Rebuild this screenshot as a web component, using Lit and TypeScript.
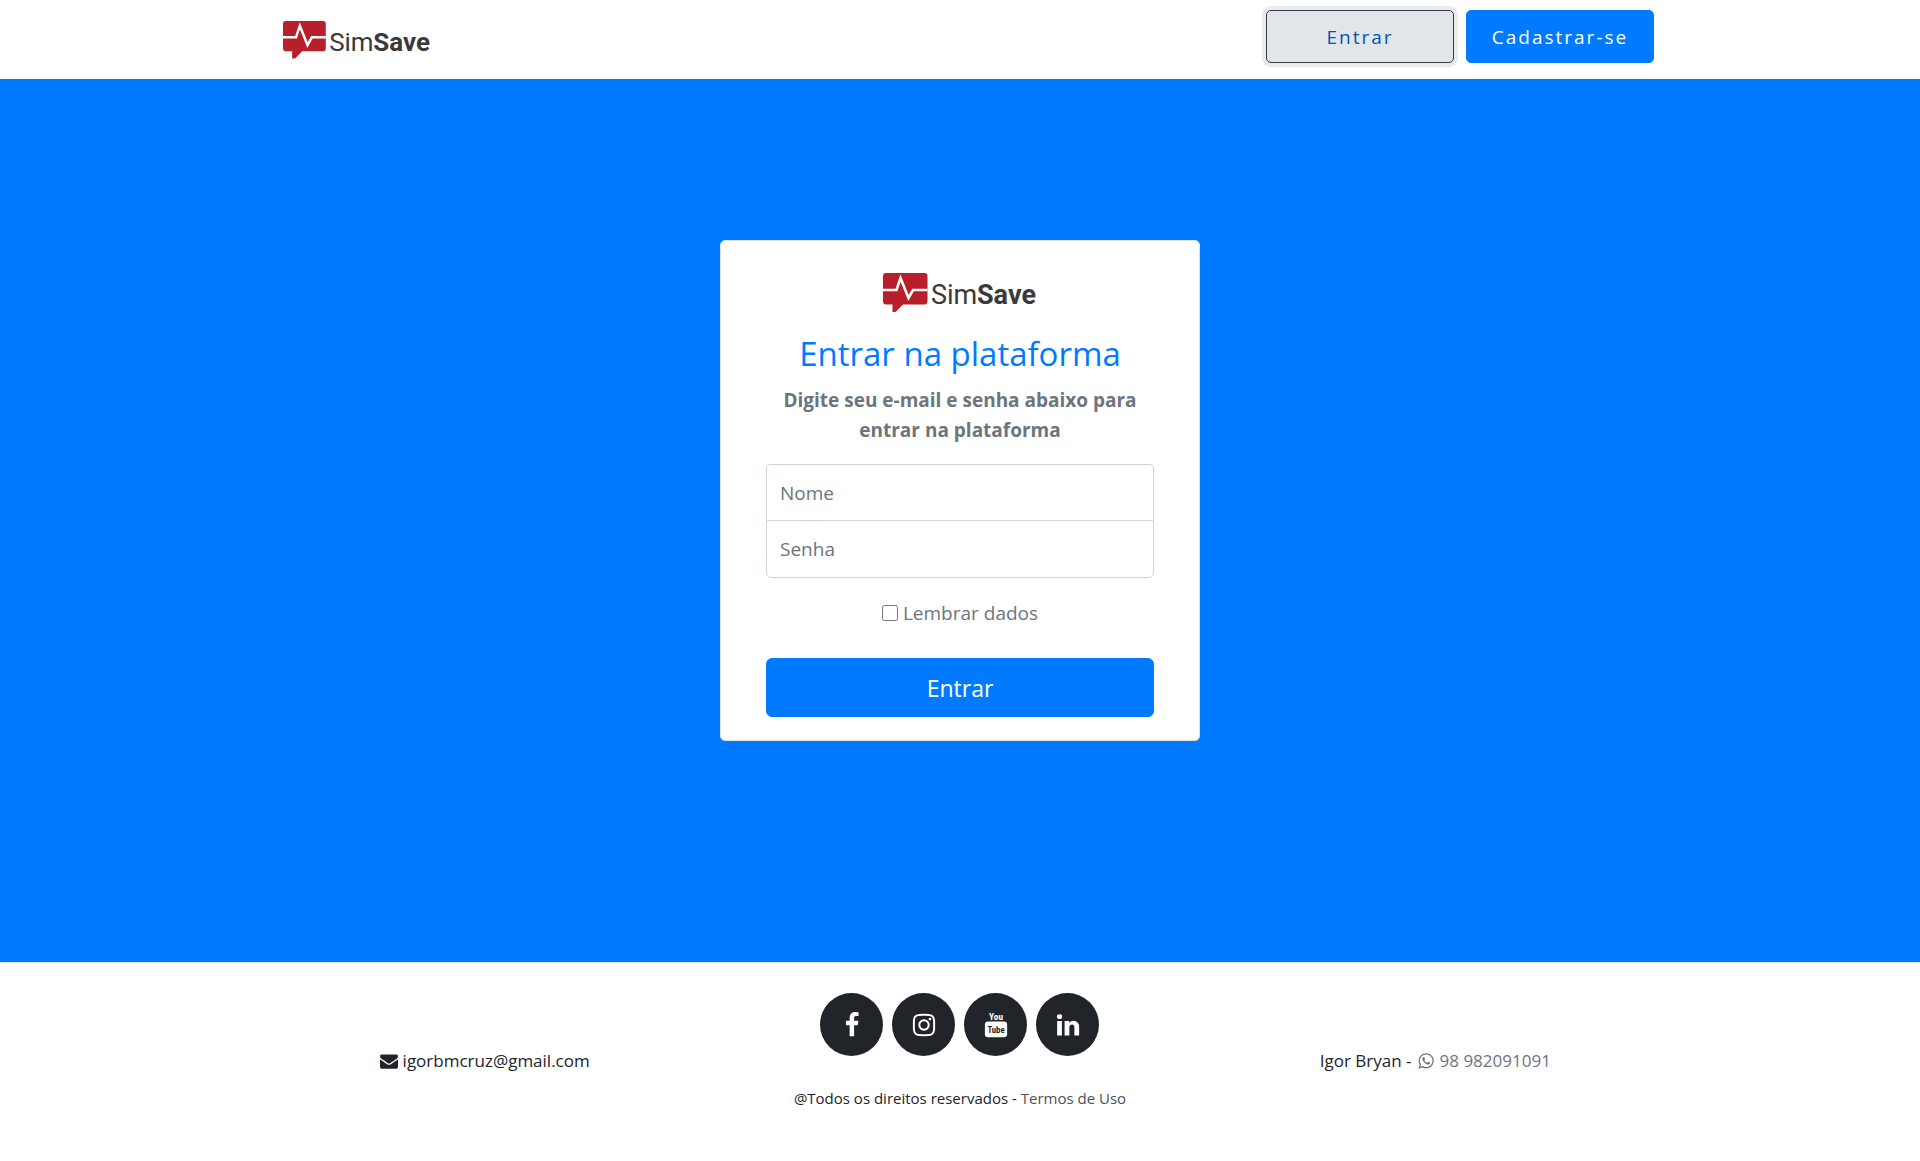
import { LitElement, html, css, svg } from "lit";
import { customElement } from "lit/decorators.js";

const facebook = svg`<path d="M1343 12v264h-157q-86 0-116 36t-30 108v189h293l-39 296h-254v759h-306v-759h-255v-296h255v-218q0-186 104-288.5t277-102.5q147 0 228 12z"/>`;
const instagram = svg`<path d="M1152 896q0-106-75-181t-181-75-181 75-75 181 75 181 181 75 181-75 75-181zm138 0q0 164-115 279t-279 115-279-115-115-279 115-279 279-115 279 115 115 279zm108-410q0 38-27 65t-65 27-65-27-27-65 27-65 65-27 65 27 27 65zm-502-220q-7 0-76.5-.5t-105.5 0-96.5 3-103 10-71.5 18.5q-50 20-88 58t-58 88q-11 29-18.5 71.5t-10 103-3 96.5 0 105.5.5 76.5-.5 76.5 0 105.5 3 96.5 10 103 18.5 71.5q20 50 58 88t88 58q29 11 71.5 18.5t103 10 96.5 3 105.5 0 76.5-.5 76.5.5 105.5 0 96.5-3 103-10 71.5-18.5q50-20 88-58t58-88q11-29 18.5-71.5t10-103 3-96.5 0-105.5-.5-76.5.5-76.5 0-105.5-3-96.5-10-103-18.5-71.5q-20-50-58-88t-88-58q-29-11-71.5-18.5t-103-10-96.5-3-105.5 0-76.5.5zm768 630q0 229-5 317-10 208-124 322t-322 124q-88 5-317 5t-317-5q-208-10-322-124t-124-322q-5-88-5-317t5-317q10-208 124-322t322-124q88-5 317-5t317 5q208 10 322 124t124 322q5 88 5 317z"/>`;
const youtube = svg`
  <text class="tube" x="896" y="520" font-size="640" text-anchor="middle" fill="#fff">You</text>
  <rect x="130" y="660" width="1532" height="1080" rx="220"/>
  <text class="tube" x="896" y="1420" font-size="600" text-anchor="middle" fill="#212529">Tube</text>`;
const linkedin = svg`<path d="M477 625v991h-330v-991h330zm21-306q1 73-50.5 122t-135.5 49h-2q-82 0-132-49t-50-122q0-74 51.5-122.5t134.5-48.5 133 48.5 51 122.5zm1166 729v568h-329v-530q0-105-40.5-164.5t-126.5-59.5q-63 0-105.5 34.5t-63.5 85.5q-11 30-11 81v553h-329q2-399 2-647t-1-296l-1-48h329v144h-2q20-32 41-56t56.5-52 87-43.5 114.5-15.5q171 0 275 113.5t104 332.5z"/>`;
const envelope = svg`<path d="M1792 710v794q0 66-47 113t-113 47h-1472q-66 0-113-47t-47-113v-794q44 49 101 87 362 246 497 345 57 42 92.5 65.5t94.5 48 110 24.5h2q51 0 110-24.5t94.5-48 92.5-65.5q170-123 498-345 57-39 100-87zm0-294q0 79-49 151t-122 123q-376 261-468 325-10 7-42.5 31t-54 38.5-52 32.5-57.5 27-50 9h-2q-23 0-50-9t-57.5-27-52-32.5-54-38.5-42.5-31q-91-64-262-182.5t-205-142.5q-62-42-117-115.5t-55-136.5q0-78 41.5-130t118.5-52h1472q65 0 112.5 47t47.5 113z"/>`;
const whatsapp = svg`<path d="M1113 974q13 0 97.5 44t89.5 53q2 5 2 15 0 33-17 76-16 39-71 65.5t-102 26.5q-57 0-190-62-98-45-170-118t-148-185q-72-107-71-194v-8q3-91 74-158 24-22 52-22 6 0 18 1.5t19 1.5q19 0 26.5 6.5t15.5 27.5q8 20 33 88t25 75q0 21-34.5 57.5t-34.5 46.5q0 7 5 15 34 73 102 137 56 53 151 101 12 7 22 7 15 0 54-48.5t52-48.5zm-203 530q127 0 243.5-50t200.5-134 134-200.5 50-243.5-50-243.5-134-200.5-200.5-134-243.5-50-243.5 50-200.5 134-134 200.5-50 243.5q0 203 120 368l-79 233 242-77q158 104 345 104zm0-1382q153 0 292.5 60t240.5 161 161 240.5 60 292.5-60 292.5-161 240.5-240.5 161-292.5 60q-195 0-365-94l-417 134 136-405q-108-178-108-389 0-153 60-292.5t161-240.5 240.5-161 292.5-60z"/>`;

const socials = [
  { name: "Facebook", icon: facebook },
  { name: "Instagram", icon: instagram },
  { name: "YouTube", icon: youtube },
  { name: "LinkedIn", icon: linkedin },
];

@customElement("sim-logo")
export class SimLogo extends LitElement {
  static styles = css`
    :host { display: block; }
    .mark { display: block; width: 100%; height: auto; overflow: visible; }
    .word { font-family: Roboto, "Liberation Sans", sans-serif; font-size: 27px; fill: #3a3a3a; }
    .bold { font-weight: 700; }
  `;
  render() {
    return html`
      <svg class="mark" viewBox="0 0 154 39" role="img" aria-label="SimSave">
        <path fill="#b81f2a" d="M3 0H41.500Q44.500 0 44.500 3V28Q44.500 31.500 41.500 31.500H20L12.500 39H9.500V31.500H3Q0 31.500 0 28V3Q0 0 3 0Z"/>
        <path fill="none" stroke="#fff" stroke-width="2.600" d="M0 17H13.500L17.500 5L25.500 25L30 17H44.500"/>
        <text class="word" x="48" y="31">Sim</text>
        <text class="word bold" x="94" y="31">Save</text>
      </svg>`;
  }
}

@customElement("app-root")
export class AppRoot extends LitElement {
  static styles = css`
    :host {
      display: flex;
      flex-direction: column;
      min-height: 100vh;
      background: #fff;
      color: #212529;
      font-family: "Segoe UI", "Open Sans", "Noto Sans", sans-serif;
      font-size: 19px;
      line-height: 30px;
    }
    * { box-sizing: border-box; }
    a { color: inherit; text-decoration: none; }
    .container { width: 100%; max-width: 1426px; margin: 0 auto; }
    .bar { display: flex; align-items: flex-start; justify-content: space-between; padding: 10px 19px 16px 36px; }
    .brand { width: 148px; margin-top: 11px; }
    .actions { display: flex; gap: 12px; }
    .button {
      width: 188px;
      height: 53px;
      border: 1px solid #007bff;
      border-radius: 5px;
      background: #007bff;
      color: #fff;
      font: inherit;
      letter-spacing: 2px;
      cursor: pointer;
    }
    .current {
      border-color: #343a40;
      background: #e2e6ea;
      color: #0056b3;
      box-shadow: 0 0 0 4px #e9ebec;
    }
    main {
      display: flex;
      flex: 1;
      align-items: flex-start;
      justify-content: center;
      padding: 161px 20px;
      background: #007bff;
    }
    .card {
      display: flex;
      flex-direction: column;
      width: 100%;
      max-width: 480px;
      padding: 32px 45px 23px;
      border: 1px solid #dfdfdf;
      border-radius: 5px;
      background: #fff;
      color: #6c757d;
      text-align: center;
    }
    .badge { width: 154px; margin: 0 auto; }
    h1 { margin: 20px 0 9px; color: #007bff; font-size: 33px; font-weight: 400; line-height: 44px; }
    .lead { margin: 0 0 19px; font-size: 19px; font-weight: 700; }
    .field {
      width: 100%;
      height: 56px;
      padding: 0 13px;
      border: 1px solid #ced4da;
      background: #fff;
      color: #495057;
      font: inherit;
    }
    .field::placeholder { color: #6c757d; opacity: 1; }
    .first { border-radius: 5px 5px 0 0; border-bottom: 0; }
    .last { height: 58px; border-radius: 0 0 5px 5px; }
    .remember { display: flex; align-items: center; justify-content: center; gap: 5px; margin: 20px 0 30px; }
    .check { width: 16px; height: 16px; margin: 0; }
    .submit { width: 100%; height: 59px; border-radius: 6px; font-size: 23px; letter-spacing: normal; }
    footer { border-top: 1px solid #dee2e6; padding: 30px 0 48px; font-size: 17px; }
    .columns { display: grid; grid-template-columns: repeat(3, 1fr); align-items: center; text-align: center; }
    .contact { display: flex; align-items: center; justify-content: center; gap: 5px; padding-top: 16px; }
    .muted { display: inline-flex; align-items: center; gap: 5px; color: #6c757d; }
    .glyph { width: 18px; height: 18px; fill: currentColor; }
    .socials { display: flex; justify-content: center; gap: 9px; margin-bottom: 27px; }
    .social {
      display: flex;
      align-items: center;
      justify-content: center;
      width: 63px;
      height: 63px;
      border-radius: 50%;
      background: #212529;
    }
    .icon { width: 26px; height: 26px; fill: #fff; overflow: visible; }
    .tube { font-family: "Roboto Condensed", "Liberation Sans Narrow", Roboto, sans-serif; font-weight: 700; }
    .legal { margin: 0; font-size: 15px; }
    .terms { color: #495057; }
  `;

  render() {
    return html`
      <header>
        <div class="container bar">
          <a class="brand" href="#"><sim-logo></sim-logo></a>
          <nav class="actions">
            <button class="button current" type="button">Entrar</button>
            <button class="button" type="button">Cadastrar-se</button>
          </nav>
        </div>
      </header>
      <main>
        <form class="card">
          <sim-logo class="badge"></sim-logo>
          <h1>Entrar na plataforma</h1>
          <p class="lead">Digite seu e-mail e senha abaixo para entrar na plataforma</p>
          <input class="field first" type="text" placeholder="Nome" aria-label="Nome">
          <input class="field last" type="password" placeholder="Senha" aria-label="Senha">
          <label class="remember"><input class="check" type="checkbox">Lembrar dados</label>
          <button class="button submit" type="button">Entrar</button>
        </form>
      </main>
      <footer>
        <div class="container columns">
          <a class="contact" href="mailto:igorbmcruz@gmail.com">
            <svg class="glyph" viewBox="0 0 1792 1792">${envelope}</svg>igorbmcruz@gmail.com
          </a>
          <div>
            <div class="socials">
              ${socials.map(
                (s) => html`<a class="social" href="#" aria-label=${s.name}>
                  <svg class="icon" viewBox="0 0 1792 1792">${s.icon}</svg>
                </a>`
              )}
            </div>
            <p class="legal">@Todos os direitos reservados - <a class="terms" href="#">Termos de Uso</a></p>
          </div>
          <div class="contact">
            <span>Igor Bryan -</span>
            <a class="muted" href="tel:98982091091">
              <svg class="glyph" viewBox="0 0 1792 1792">${whatsapp}</svg>98 982091091
            </a>
          </div>
        </div>
      </footer>`;
  }
}
